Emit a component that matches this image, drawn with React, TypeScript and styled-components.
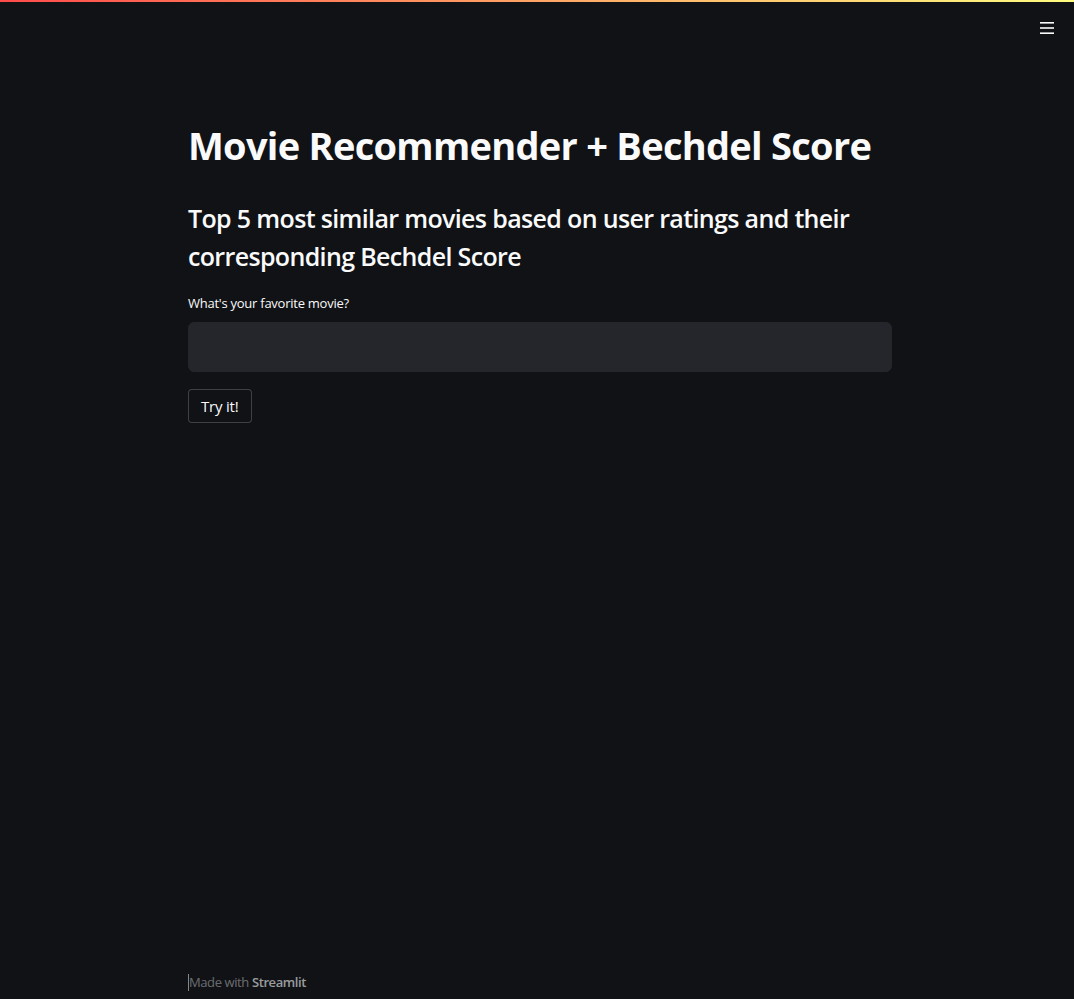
import React from "react";
import styled, { createGlobalStyle } from "styled-components";

const Global = createGlobalStyle`
  html, body { margin: 0; padding: 0; background: #101216; }
  body { font-family: "Open Sans", "Noto Sans", sans-serif; color: #fafafa; }
  * { box-sizing: border-box; }
`;

const Page = styled.div`
  position: relative;
  min-height: 999px;
  background: #101216;
  display: flex;
  flex-direction: column;
`;

const Decoration = styled.div`
  height: 2px;
  background: linear-gradient(90deg, #ff4b4b, #fffd80);
`;

const Header = styled.div`
  height: 0;
  position: relative;
`;

const Menu = styled.button`
  position: absolute;
  right: 14px;
  top: 15px;
  width: 26px;
  height: 22px;
  background: none;
  border: none;
  padding: 0;
  color: #fafafa;
  display: flex;
  align-items: center;
  justify-content: center;
`;

const Main = styled.main`
  flex: 1;
  width: 704px;
  margin-left: 188px;
  padding-top: 116px;
  display: flex;
  flex-direction: column;
`;

const Title = styled.h1`
  margin: 0;
  font-family: "Open Sans", sans-serif;
  font-weight: 700;
  font-size: 38px;
  line-height: 54px;
  letter-spacing: -0.72px;
  white-space: nowrap;
  color: #fafafa;
`;

const Sub = styled.h3`
  margin: 27px 0 0;
  font-family: "Open Sans", sans-serif;
  font-weight: 600;
  font-size: 25px;
  line-height: 38px;
  letter-spacing: -0.65px;
  color: #fafafa;
`;

const Label = styled.label`
  margin-top: 19px;
  font-size: 13px;
  line-height: 18px;
  color: #fafafa;
  letter-spacing: -0.25px;
`;

const Input = styled.input`
  margin-top: 10px;
  height: 50px;
  width: 100%;
  background: #25262c;
  border: 1px solid #25262c;
  border-radius: 6px;
  color: #fafafa;
  font-size: 16px;
  padding: 0 12px;
  outline: none;
`;

const Button = styled.button`
  margin-top: 17px;
  align-self: flex-start;
  height: 34px;
  padding: 0 12px;
  background: #101216;
  border: 1px solid rgba(250, 250, 250, 0.2);
  border-radius: 4px;
  color: #fafafa;
  font-family: "Open Sans", sans-serif;
  font-size: 15px;
  letter-spacing: -0.2px;
`;

const Footer = styled.footer`
  margin-left: 188px;
  margin-bottom: 8px;
  align-self: flex-start;
  height: 17px;
  font-size: 13px;
  line-height: 17px;
  color: rgba(250, 250, 250, 0.4);
  letter-spacing: -0.4px;
  border-left: 1px solid rgba(250, 250, 250, 0.5);
`;

const Brand = styled.span`
  font-weight: 600;
  color: rgba(250, 250, 250, 0.6);
`;

export default function App() {
  return (
    <Page>
      <Global />
      <Decoration />
      <Header>
        <Menu aria-label="menu">
          <svg width="14" height="12" viewBox="0 0 14 12">
            <rect x="0" y="0" width="14" height="1.6" fill="#fafafa" />
            <rect x="0" y="5.2" width="14" height="1.6" fill="#fafafa" />
            <rect x="0" y="10.4" width="14" height="1.6" fill="#fafafa" />
          </svg>
        </Menu>
      </Header>
      <Main>
        <Title>Movie Recommender + Bechdel Score</Title>
        <Sub>
          Top 5 most similar movies based on user ratings and their corresponding Bechdel Score
        </Sub>
        <Label>What's your favorite movie?</Label>
        <Input type="text" />
        <Button>Try it!</Button>
      </Main>
      <Footer>
        Made with <Brand>Streamlit</Brand>
      </Footer>
    </Page>
  );
}
